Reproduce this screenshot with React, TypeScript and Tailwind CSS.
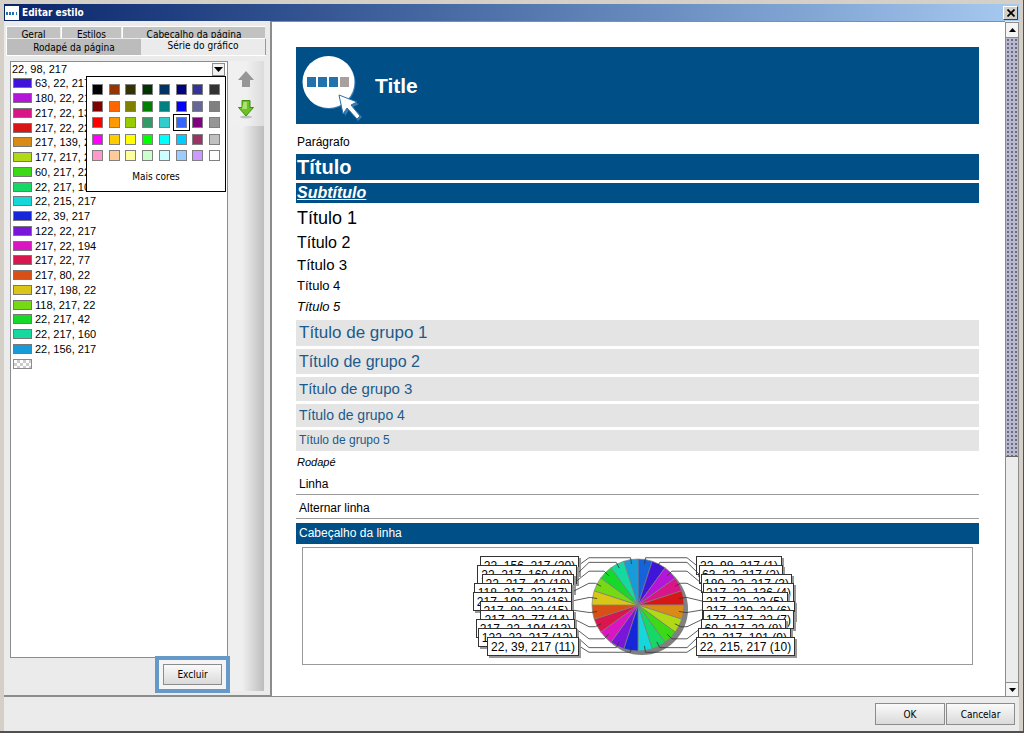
import React from "react";

const series = [
  "22, 98, 217",
  "63, 22, 217",
  "180, 22, 217",
  "217, 22, 136",
  "217, 22, 22",
  "217, 139, 22",
  "177, 217, 22",
  "60, 217, 22",
  "22, 217, 101",
  "22, 215, 217",
  "22, 39, 217",
  "122, 22, 217",
  "217, 22, 194",
  "217, 22, 77",
  "217, 80, 22",
  "217, 198, 22",
  "118, 217, 22",
  "22, 217, 42",
  "22, 217, 160",
  "22, 156, 217",
];

const palette = [
  "#000000", "#993300", "#333300", "#003300", "#003366", "#000080", "#333399", "#333333",
  "#800000", "#ff6600", "#808000", "#008000", "#008080", "#0000ff", "#666699", "#808080",
  "#ff0000", "#ff9900", "#99cc00", "#339966", "#33cccc", "#3366ff", "#800080", "#969696",
  "#ff00ff", "#ffcc00", "#ffff00", "#00ff00", "#00ffff", "#00ccff", "#993366", "#c0c0c0",
  "#ff99cc", "#ffcc99", "#ffff99", "#ccffcc", "#ccffff", "#99ccff", "#cc99ff", "#ffffff",
];

// label boxes of the pie chart: [left, right], top to bottom
const rightBoxes = [
  [225, 311], [228, 312], [230, 321], [232, 323], [231, 317],
  [231, 324], [232, 323], [230, 315], [227, 320], [225, 324],
];
const leftBoxes = [
  [9, 108], [6, 106], [11, 103], [3, 101], [2, 101],
  [9, 101], [9, 103], [5, 104], [7, 106], [16, 108],
];

const CX = 167;
const CY = 57;
const R = 46;

function polar(angle: number, r: number) {
  const rad = (angle * Math.PI) / 180;
  return [CX + r * Math.sin(rad), CY - r * Math.cos(rad)];
}

function ChartLabel({ index, row, box, side }: { index: number; row: number; box: number[]; side: number }) {
  const y = 8 + row * 9;
  const mid = index * 18 + 9;
  const [x1, y1] = polar(mid, R * 0.9);
  const [x2, y2] = polar(mid, R * 1.04);
  const edge = side > 0 ? box[0] : box[1];
  return (
    <g>
      <polyline
        points={`${x1},${y1} ${x2},${y2} ${CX + side * 49},${y2} ${edge},${y + 9}`}
        fill="none"
        stroke="#333"
        strokeWidth="0.8"
      />
      <rect x={box[0] + 2} y={y + 2} width={box[1] - box[0]} height="19" fill="#999" />
      <rect x={box[0] + 0.5} y={y + 0.5} width={box[1] - box[0] - 1} height="18" fill="#fff" stroke="#333" />
      <text x={(box[0] + box[1]) / 2} y={y + 14} textAnchor="middle" className="text-[12px]" fill="#000">
        {series[index]} ({index + 1})
      </text>
    </g>
  );
}

function PieChart() {
  return (
    <svg width="334" height="116" viewBox="0 0 334 116" role="img" aria-label="Série do gráfico">
      <circle cx={CX + 4} cy={CY + 4} r={R} fill="#808080" />
      {series.map((color, i) => {
        const [x1, y1] = polar(i * 18, R);
        const [x2, y2] = polar(i * 18 + 18, R);
        return (
          <path
            key={color}
            d={`M${CX} ${CY}L${x1} ${y1}A${R} ${R} 0 0 1 ${x2} ${y2}Z`}
            fill={`rgb(${color})`}
            stroke="#808080"
            strokeWidth="0.7"
          />
        );
      })}
      {rightBoxes.map((box, row) => (
        <ChartLabel key={row} index={row} row={row} box={box} side={1} />
      ))}
      {leftBoxes.map((box, row) => (
        <ChartLabel key={row} index={19 - row} row={row} box={box} side={-1} />
      ))}
    </svg>
  );
}

function Logo() {
  return (
    <svg width="62" height="72" viewBox="0 0 62 72" aria-hidden="true">
      <circle cx="28.500" cy="33" r="26" fill="#3a7cb4" />
      <circle cx="27.500" cy="32" r="26" fill="#fff" />
      <rect x="6" y="27" width="9" height="10" fill="#2272ae" />
      <rect x="17" y="27" width="9" height="10" fill="#2272ae" />
      <rect x="28" y="27" width="9" height="10" fill="#2272ae" />
      <rect x="39" y="27" width="9" height="10" fill="#a89f9f" />
      <path d="M40 47L58 54L52 57L61 67L57 71L48 60L44 66Z" fill="#3a7cb4" />
      <path
        d="M38 45L56 52L50 55L59 66L56 69L46 58L42 64Z"
        fill="#fff"
        stroke="#2a6ea8"
        strokeWidth="1"
      />
    </svg>
  );
}

function Palette() {
  return (
    <div className="absolute top-[14px] left-[75px] z-10 flex h-[116px] w-[140px] flex-col items-center border border-black bg-white pt-[7px] font-['DejaVu_Sans_Condensed','DejaVu_Sans',sans-serif]">
      <div className="grid h-[77px] w-[128px] grid-cols-[repeat(8,11px)] content-between justify-between">
        {palette.map((c) => (
          <button
            key={c}
            aria-label={c}
            className={`size-[11px] border border-[#808080] ${c === "#3366ff" ? "outline-1 outline-offset-2 outline-black" : ""}`}
            style={{ backgroundColor: c }}
          />
        ))}
      </div>
      <button className="mt-2 text-[10px] leading-4">Mais cores</button>
    </div>
  );
}

const button = "border border-[#8c8c8c] bg-linear-to-b from-[#fafafa] to-[#dadada] text-[10px]";

export default function App() {
  return (
    <div className="flex min-h-screen flex-col border-r border-b-2 border-[#505050] bg-[#d4d0c8] pt-1 pr-1 pl-1 font-['DejaVu_Sans_Condensed','DejaVu_Sans',sans-serif] text-black">
      {/* Title bar */}
      <header className="flex h-[17px] items-center gap-[3px] bg-linear-to-r from-[#0a246a] to-[#a6caf0] pr-px pl-px">
        <svg width="14" height="14" viewBox="0 0 14 14" aria-hidden="true">
          <rect width="14" height="14" fill="#fff" />
          <path d="M1 6h2v3H1zM4 6h2v3H4zM7 6h2v3H7z" fill="#2272ae" />
          <path d="M11 6h1v3h-1z" fill="#2272ae" />
        </svg>
        <h1 className="flex-1 text-[10px] font-bold text-white">Editar estilo</h1>
        <button
          aria-label="Fechar"
          className="flex h-[14px] w-[15px] items-center justify-center border border-t-white border-r-[#404040] border-b-[#404040] border-l-white bg-[#d4d0c8]"
        >
          <svg width="8" height="8" viewBox="0 0 8 8">
            <path d="M0.5 0.5L7.5 7.5M7.5 0.5L0.5 7.5" stroke="#000" strokeWidth="1.7" />
          </svg>
        </button>
      </header>

      <div className="flex flex-1 bg-[#ebebeb]">
        {/* Style options */}
        <aside className="flex w-[268px] shrink-0 flex-col border-r-2 border-b-2 border-[#8c8c8c] pt-[5px] pr-1 pl-[2px] text-[10px]">
          <div role="tablist">
            <div className="flex h-[12px] gap-px overflow-hidden pr-px">
              <button role="tab" className="flex h-[15px] w-[54px] items-center justify-center border-t border-l border-white bg-[#c2c2c2]">Geral</button>
              <button role="tab" className="flex h-[15px] w-[60px] items-center justify-center border-t border-l border-white bg-[#c2c2c2]">Estilos</button>
              <button role="tab" className="flex h-[15px] flex-1 items-center justify-center border-t border-l border-white bg-[#c2c2c2]">Cabeçalho da página</button>
            </div>
            <div className="flex h-[17px] items-end">
              <button role="tab" className="flex h-[16px] w-[135px] items-center justify-center border-l border-white bg-[#bcbcbc]">Rodapé da página</button>
              <button role="tab" aria-selected="true" className="flex h-[17px] flex-1 items-center justify-center border-t border-r border-t-white border-r-[#999] bg-[#ebebeb] pb-[3px]">Série do gráfico</button>
            </div>
          </div>

          <div className="flex flex-1 border-t border-white pt-[5px] pr-[2px] pb-1 pl-[4px]">
            <div className="flex w-[218px] flex-col">
              <div className="relative flex-1 border border-[#8c8c8c] bg-white font-['Liberation_Sans',Arial,sans-serif]">
                <div className="flex h-[14px] items-center pr-[2px] pl-px">
                  <input
                    aria-label="Cor da série"
                    defaultValue={series[0]}
                    className="w-full min-w-0 flex-1 text-[11px] leading-[14px] outline-none"
                  />
                  <button aria-label="Abrir cores" className="flex h-[13px] w-[13px] items-center justify-center border border-[#8c8c8c] bg-[#f2f2f2]">
                    <svg width="9" height="5" viewBox="0 0 9 5">
                      <path d="M0 0H9L4.5 5Z" fill="#000" />
                    </svg>
                  </button>
                </div>
                <ul className="grid h-[295px] auto-rows-fr pl-[2px] text-[11px] leading-[14px]">
                  {series.slice(1).map((color) => (
                    <li key={color} className="flex items-center gap-[3px]">
                      <span className="h-[10px] w-[19px] border border-[#777]" style={{ backgroundColor: `rgb(${color})` }} />
                      {color}
                    </li>
                  ))}
                  <li className="flex items-center">
                    <span className="h-[10px] w-[19px] border border-[#8c8c8c] bg-[repeating-conic-gradient(#ccc_0_25%,#fff_0_50%)] bg-size-[6px_6px]" />
                  </li>
                </ul>
                <Palette />
              </div>
              <div className="z-10 flex h-[33px] justify-end">
                <div className="-mt-[2px] -mr-[2px] h-[37px] w-[75px] shrink-0 border-4 border-[#6699c7] bg-[#f4f4f4] p-1">
                  <button className={`size-full ${button}`}>Excluir</button>
                </div>
              </div>
            </div>
            <div className="flex-1 bg-linear-to-r from-[#efefef] from-40% to-[#bdbdbd]">
              <div className="flex h-[65px] flex-col items-center gap-[11px] bg-linear-to-r from-[#f0f0f0] from-50% to-[#dcdcdc] pt-[9px]">
                <button aria-label="Mover para cima">
                  <svg width="18" height="18" viewBox="0 0 18 18">
                    <path d="M9 1L17 10H13V17H5V10H1Z" fill="#969696" />
                  </svg>
                </button>
                <button aria-label="Mover para baixo">
                  <svg width="18" height="20" viewBox="0 0 18 20">
                    <ellipse cx="9" cy="18" rx="6" ry="1.5" fill="#b9c3bd" />
                    <path d="M5 1.5H13V8.500H16.500L9 17L1.500 8.500H5Z" fill="#6cc224" stroke="#438c17" />
                    <path d="M6.500 3H10V10H5Z" fill="#a9e36d" />
                  </svg>
                </button>
              </div>
            </div>
          </div>
        </aside>

        {/* Preview */}
        <main className="flex-1 border-t border-b border-[#8c8c8c] bg-white pt-[25px] pr-[26px] pl-6 font-['Liberation_Sans',Arial,sans-serif] text-xs">
          <div className="flex h-[77px] items-center gap-[12px] bg-[#004f86] pl-[5px]">
            <Logo />
            <span className="text-[21px] font-bold text-white">Title</span>
          </div>
          <p className="mt-[9px] pl-px leading-[18px]">Parágrafo</p>
          <h2 className="mt-[3px] bg-[#004f86] pl-px text-[20px] leading-[26px] font-bold text-white">Título</h2>
          <h3 className="mt-[3px] bg-[#004f86] pl-px text-base leading-[20px] font-bold text-white italic underline">Subtítulo</h3>
          <p className="mt-[2px] pl-px text-[18px] leading-[26px]">Título 1</p>
          <p className="pl-px text-base leading-[24px]">Título 2</p>
          <p className="pl-px text-[15px] leading-[20px]">Título 3</p>
          <p className="pl-px text-[13px] leading-[21px]">Título 4</p>
          <p className="pl-px text-[13px] leading-[21px] italic">Título 5</p>

          <div className="mt-[3px] flex flex-col gap-[3px] text-[#1b5b8c]">
            <p className="bg-[#e4e4e4] pl-[3px] text-[17px] leading-[26px]">Título de grupo 1</p>
            <p className="bg-[#e4e4e4] pl-[3px] text-base leading-[25px]">Título de grupo 2</p>
            <p className="bg-[#e4e4e4] pl-[3px] text-[15px] leading-[24px]">Título de grupo 3</p>
            <p className="bg-[#e4e4e4] pl-[3px] text-[14px] leading-[23px]">Título de grupo 4</p>
            <p className="bg-[#e4e4e4] pl-[3px] text-xs leading-[21px]">Título de grupo 5</p>
          </div>

          <p className="mt-[2px] pl-px text-[11px] leading-[18px] italic">Rodapé</p>
          <p className="mt-[3px] border-b border-[#999] pl-[3px] leading-[20px]">Linha</p>
          <p className="mt-[3px] border-b border-[#999] pl-[3px] leading-[20px]">Alternar linha</p>
          <p className="mt-[4px] bg-[#004f86] pl-[3px] leading-[21px] text-white">Cabeçalho da linha</p>

          <div className="mx-[6px] mt-[3px] flex justify-center border border-[#999]">
            <PieChart />
          </div>
        </main>

        {/* Scrollbar */}
        <div className="mt-px flex w-[14px] shrink-0 flex-col border border-[#8c8c8c] bg-[#ececec]">
          <button aria-label="Rolar para cima" className="flex h-[15px] items-center justify-center border-b border-[#8c8c8c] bg-[#f4f4f4]">
            <svg width="7" height="4" viewBox="0 0 7 4">
              <path d="M0 4H7L3.500 0Z" fill="#000" />
            </svg>
          </button>
          <div className="flex-1">
            <div className="h-[65%] border-b border-[#666] bg-[#b9b9cd] bg-[radial-gradient(#6c6c88_1px,transparent_1px)] bg-size-[4px_4px]" />
          </div>
          <button aria-label="Rolar para baixo" className="flex h-[14px] items-center justify-center border-t border-[#8c8c8c] bg-[#f4f4f4]">
            <svg width="7" height="4" viewBox="0 0 7 4">
              <path d="M0 0H7L3.500 4Z" fill="#000" />
            </svg>
          </button>
        </div>
      </div>

      <footer className="flex h-[34px] items-center justify-end gap-px bg-[#ebebeb] pr-[4px]">
        <button className={`h-[22px] w-[70px] ${button}`}>OK</button>
        <button className={`h-[22px] w-[69px] ${button}`}>Cancelar</button>
      </footer>
    </div>
  );
}
